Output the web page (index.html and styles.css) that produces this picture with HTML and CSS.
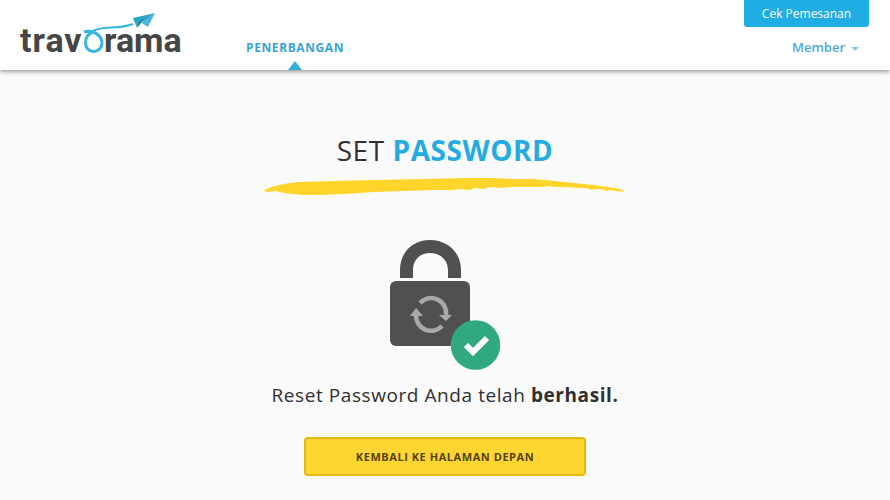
FILE: index.html
```html
<!DOCTYPE html>
<html lang="id">
<head>
  <meta charset="utf-8">
  <meta name="viewport" content="width=device-width, initial-scale=1">
  <title>Travorama - Set Password</title>
  <link rel="stylesheet" href="styles.css">
</head>
<body>
  <header class="site-header">
    <a class="logo" href="#" aria-label="travorama">
      <svg width="168" height="60" viewBox="0 0 168 60">
        <defs>
          <linearGradient id="wing" x1="0" y1="0" x2="1" y2="1">
            <stop offset="0" stop-color="#1795bd"/>
            <stop offset="1" stop-color="#4cc3e6"/>
          </linearGradient>
        </defs>
        <text class="logo-text logo-start" x="0" y="42">trav</text>
        <text class="logo-text" x="84" y="42">rama</text>
        <path class="ribbon" d="M64 22C72 19 82 25 82 33C82 38 78 41.500 73.500 41.500C69 41.500 65.500 38 65.500 33C65.500 27 69 23 75 21"/>
        <path class="trail" d="M73 21C84 15 98 20 113 14"/>
        <path fill="url(#wing)" d="M113 8L135 3L119 11L117 18Z"/>
        <path fill="#126d8e" d="M117 18L119 11L135 3L121 13Z"/>
        <path fill="#48b9dc" d="M120 12L135 3L128 17Z"/>
      </svg>
    </a>
    <nav class="main-nav">
      <a class="nav-link" href="#">PENERBANGAN</a>
    </nav>
    <div class="account">
      <a class="check-order" href="#">Cek Pemesanan</a>
      <a class="member" href="#">Member<span class="caret"></span></a>
    </div>
  </header>

  <main class="content">
    <h1 class="title">SET <strong>PASSWORD</strong></h1>
    <svg class="brush" width="362" height="18" viewBox="0 0 362 18" aria-hidden="true">
      <path d="M0 13C6 8 18 6 34 4L70 3L110 2L160 1L200 0L228 0L250 1L270 1L300 4L330 7L350 10L357 11L359 13L361 14L352 13L345 12L343 13L337 11L330 11L327 12L323 10L316 10L300 9L292 9L284 8L280 9L270 9L246 9L236 10L226 9L219 11L211 10L206 12L196 11L188 12L170 12L140 13L110 14L80 16L55 17L38 17L20 15L12 13L3 14Z"/>
    </svg>
    <svg class="lock" width="111" height="130" viewBox="0 0 111 130" role="img" aria-label="Password berhasil diatur ulang">
      <path fill="#505050" d="M10 38V30C10 12 23 0 40 0C57 0 71 12 71 30V38H58V30C58 20 50 13 40 13C30 13 23 20 23 30V38Z"/>
      <rect fill="#505050" y="41" width="80" height="65" rx="6"/>
      <g fill="none" stroke="#a9a9a9" stroke-width="4.500">
        <path d="M30 63A15 15 0 0 1 56 75"/>
        <path d="M52 86A15 15 0 0 1 26 75"/>
      </g>
      <path fill="#a9a9a9" d="M49 75H62L56 81ZM20 76H33L26 68Z"/>
      <circle fill="#30a982" cx="85.500" cy="105" r="24.800"/>
      <path fill="none" stroke="#fff" stroke-width="6" d="M76 105L83 112L97 98"/>
    </svg>
    <p class="message">Reset Password Anda telah <strong>berhasil.</strong></p>
    <a class="home-button" href="#">KEMBALI KE HALAMAN DEPAN</a>
  </main>
</body>
</html>
```

FILE: styles.css
```css
* {
  box-sizing: border-box;
}

body {
  margin: 0;
  min-height: 100vh;
  background: #fafafa;
  color: #303030;
  font-family: "Open Sans", sans-serif;
}

a {
  text-decoration: none;
}

.site-header {
  display: flex;
  height: 70px;
  padding: 0 21px 0 20px;
  background: #fff;
  box-shadow: 0 1px 5px rgba(0, 0, 0, 0.5);
}

.logo {
  padding-top: 10px;
}

.logo svg {
  display: block;
}

.logo-text {
  fill: #464646;
  font-family: Roboto, sans-serif;
  font-size: 34px;
  font-weight: 700;
}

.logo-start {
  letter-spacing: 1px;
}

.ribbon,
.trail {
  fill: none;
  stroke: #36b5e4;
  stroke-width: 3;
}

.trail {
  stroke-width: 2;
}

.main-nav {
  margin-left: 58px;
}

.nav-link {
  display: flex;
  flex-direction: column;
  align-items: center;
  justify-content: space-between;
  height: 70px;
  padding-top: 39px;
  color: #36a3d9;
  font-size: 12px;
  font-weight: 700;
  letter-spacing: 0.05em;
  line-height: 18px;
}

.nav-link::after {
  content: "";
  border: 7px solid transparent;
  border-top-width: 0;
  border-bottom: 9px solid #32afd9;
}

.account {
  display: flex;
  flex-direction: column;
  align-items: flex-end;
  margin-left: auto;
}

.check-order {
  width: 125px;
  height: 27px;
  border-radius: 0 0 3px 3px;
  background: #20ade4;
  color: #fff;
  font-size: 12px;
  line-height: 27px;
  text-align: center;
}

.member {
  display: flex;
  align-items: center;
  gap: 6px;
  padding: 11px 10px 0 0;
  color: #4fa9d8;
  font-size: 13px;
  font-weight: 600;
  line-height: 18px;
}

.caret {
  margin-top: 3px;
  border: 4px solid transparent;
  border-top-color: #8dcbe6;
  border-bottom-width: 0;
}

.content {
  display: flex;
  flex-direction: column;
  align-items: center;
  padding: 60px 20px 24px;
}

.title {
  margin: 0;
  font-size: 28px;
  font-weight: 400;
  letter-spacing: 0.02em;
  line-height: 40px;
}

.title strong {
  color: #24ace2;
  font-weight: 700;
}

.brush {
  margin-top: 8px;
  fill: #ffd52b;
}

.lock {
  margin-top: 44px;
}

.message {
  margin: 10px 0 0;
  font-size: 19px;
  letter-spacing: 0.03em;
  line-height: 30px;
}

.home-button {
  width: 282px;
  max-width: 100%;
  margin-top: 27px;
  border: 2px solid #e4b80c;
  border-radius: 4px;
  background: #ffd631;
  color: #54400b;
  font-size: 11px;
  font-weight: 700;
  letter-spacing: 0.05em;
  line-height: 35px;
  text-align: center;
}
```
